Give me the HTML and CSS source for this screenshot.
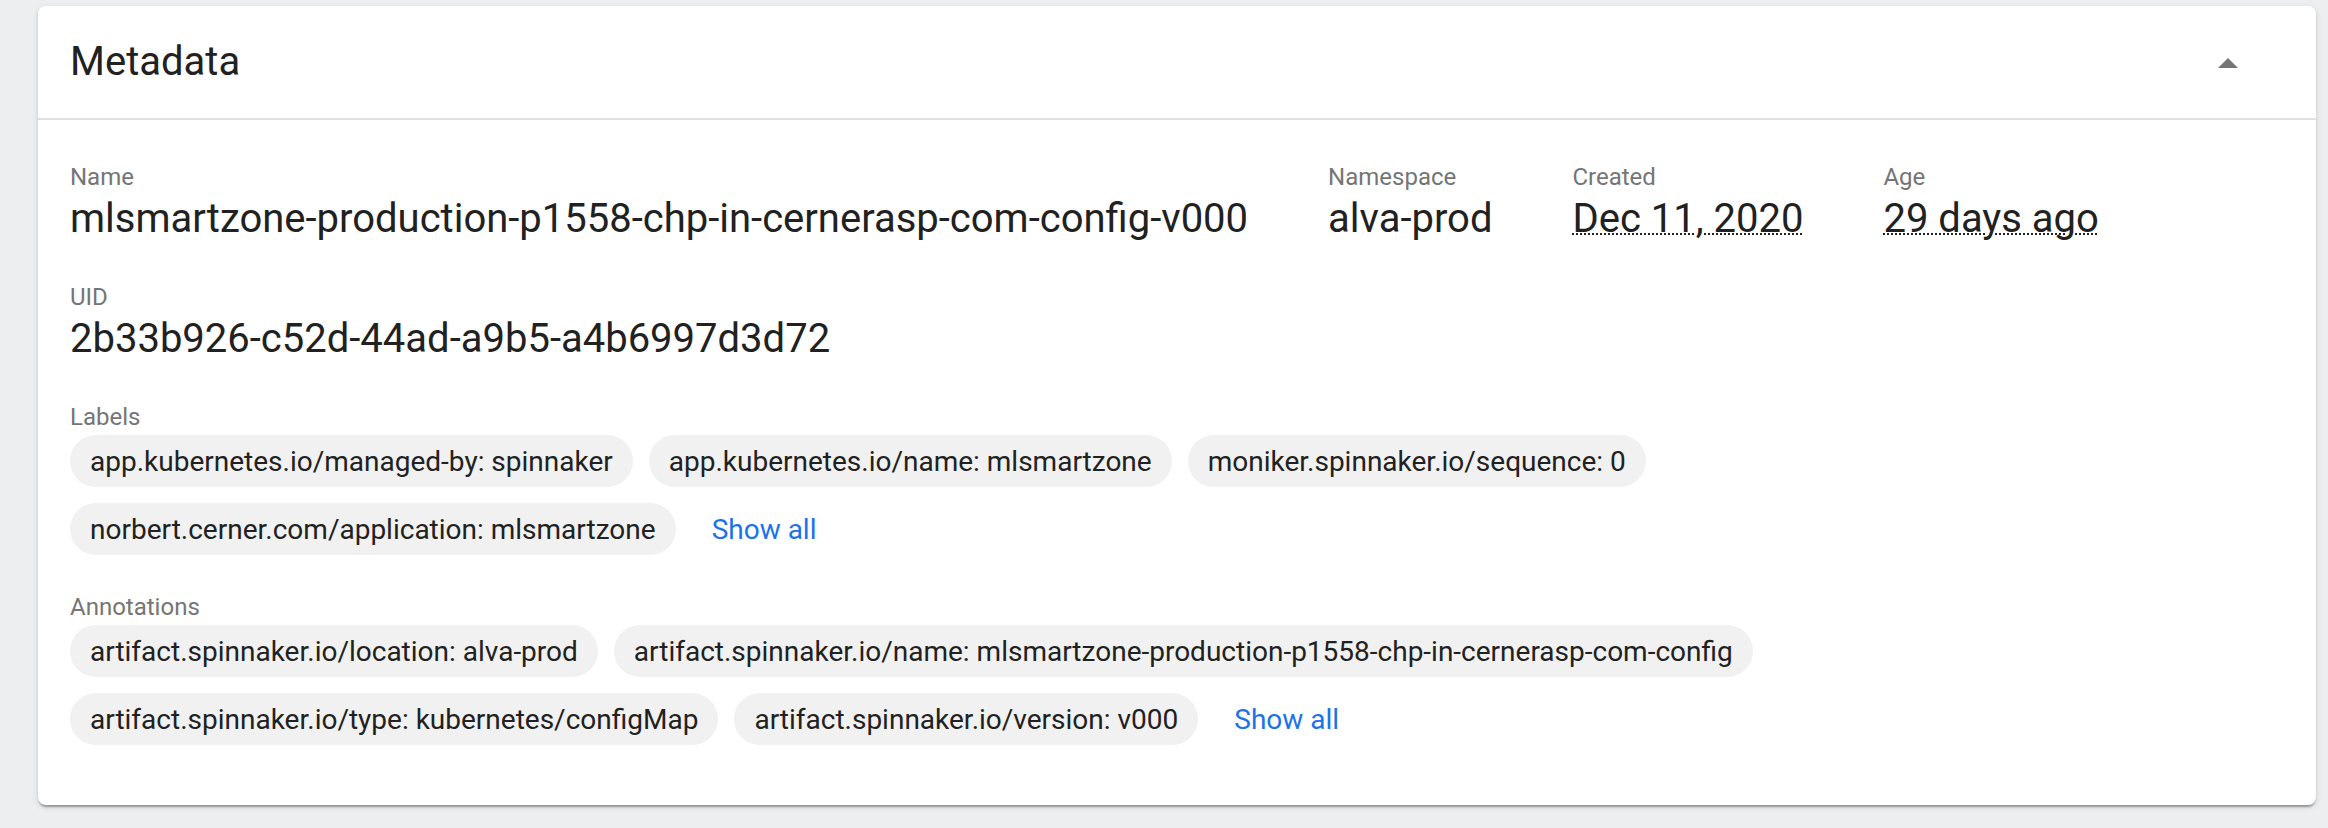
FILE: index.html
```html
<!DOCTYPE html>
<html lang="en">
<head>
<meta charset="utf-8">
<title>Metadata</title>
<link rel="stylesheet" href="styles.css">
</head>
<body>
<div class="card">
  <div class="card-header">
    <div class="card-title">Metadata</div>
    <svg class="toggle" width="48" height="48" viewBox="0 0 24 24" aria-hidden="true"><path d="M7 14l5-5 5 5z" fill="#757575"/></svg>
  </div>
  <div class="card-body">
    <div class="row">
      <div class="field">
        <div class="label">Name</div>
        <div class="value">mlsmartzone-production-p1558-chp-in-cernerasp-com-config-v000</div>
      </div>
      <div class="field">
        <div class="label">Namespace</div>
        <div class="value">alva-prod</div>
      </div>
      <div class="field">
        <div class="label">Created</div>
        <div class="value dotted">Dec 11, 2020</div>
      </div>
      <div class="field">
        <div class="label">Age</div>
        <div class="value dotted">29 days ago</div>
      </div>
    </div>
    <div class="row section">
      <div class="field">
        <div class="label">UID</div>
        <div class="value">2b33b926-c52d-44ad-a9b5-a4b6997d3d72</div>
      </div>
    </div>
    <div class="section">
      <div class="label">Labels</div>
      <div class="chips">
        <span class="chip">app.kubernetes.io/managed-by: spinnaker</span>
        <span class="chip">app.kubernetes.io/name: mlsmartzone</span>
        <span class="chip">moniker.spinnaker.io/sequence: 0</span>
        <span class="chip">norbert.cerner.com/application: mlsmartzone</span>
        <a class="show-all" href="#">Show all</a>
      </div>
    </div>
    <div class="section section-last">
      <div class="label">Annotations</div>
      <div class="chips">
        <span class="chip">artifact.spinnaker.io/location: alva-prod</span>
        <span class="chip">artifact.spinnaker.io/name: mlsmartzone-production-p1558-chp-in-cernerasp-com-config</span>
        <span class="chip">artifact.spinnaker.io/type: kubernetes/configMap</span>
        <span class="chip">artifact.spinnaker.io/version: v000</span>
        <a class="show-all" href="#">Show all</a>
      </div>
    </div>
  </div>
</div>
</body>
</html>
```

FILE: styles.css
```css
html, body {
  margin: 0;
  padding: 0;
}
body {
  background: #edeef0;
  font-family: Roboto, "Noto Sans", "Liberation Sans", sans-serif;
  color: #212121;
  padding: 6px 12px 22px 38px;
}
.card {
  background: #ffffff;
  border-radius: 8px;
  box-shadow: 0 4px 2px -2px rgba(0,0,0,0.2), 0 2px 2px 0 rgba(0,0,0,0.14), 0 2px 6px 0 rgba(0,0,0,0.12);
}
.card-header {
  height: 112px;
  display: flex;
  align-items: center;
  justify-content: space-between;
  padding: 0 64px 0 32px;
  border-bottom: 2px solid #e0e0e0;
}
.card-title {
  font-size: 40px;
  line-height: 48px;
  color: #212121;
}
.toggle {
  display: block;
  margin-top: 3px;
}
.card-body {
  padding: 41px 32px 60px;
}
.row {
  display: flex;
  column-gap: 80px;
}
.section {
  margin-top: 38px;
}
.section-last {
  margin-top: 36px;
}
.label {
  font-size: 24px;
  line-height: 32px;
  color: #757575;
}
.value {
  font-size: 40px;
  line-height: 48px;
  margin-top: 2px;
  color: #212121;
  white-space: nowrap;
}
.dotted {
  text-decoration: underline dotted #212121;
  text-decoration-thickness: 2px;
}
.chips {
  display: flex;
  flex-wrap: wrap;
  gap: 16px;
  margin-top: 2px;
  max-width: 2100px;
}
.chip {
  display: inline-flex;
  align-items: center;
  height: 52px;
  padding: 0 20px;
  border-radius: 26px;
  background: #f1f1f1;
  font-size: 28px;
  color: #212121;
  white-space: nowrap;
}
.show-all {
  display: inline-flex;
  align-items: center;
  height: 52px;
  padding: 0 20px;
  font-size: 28px;
  color: #1a73e8;
  text-decoration: none;
}
```
